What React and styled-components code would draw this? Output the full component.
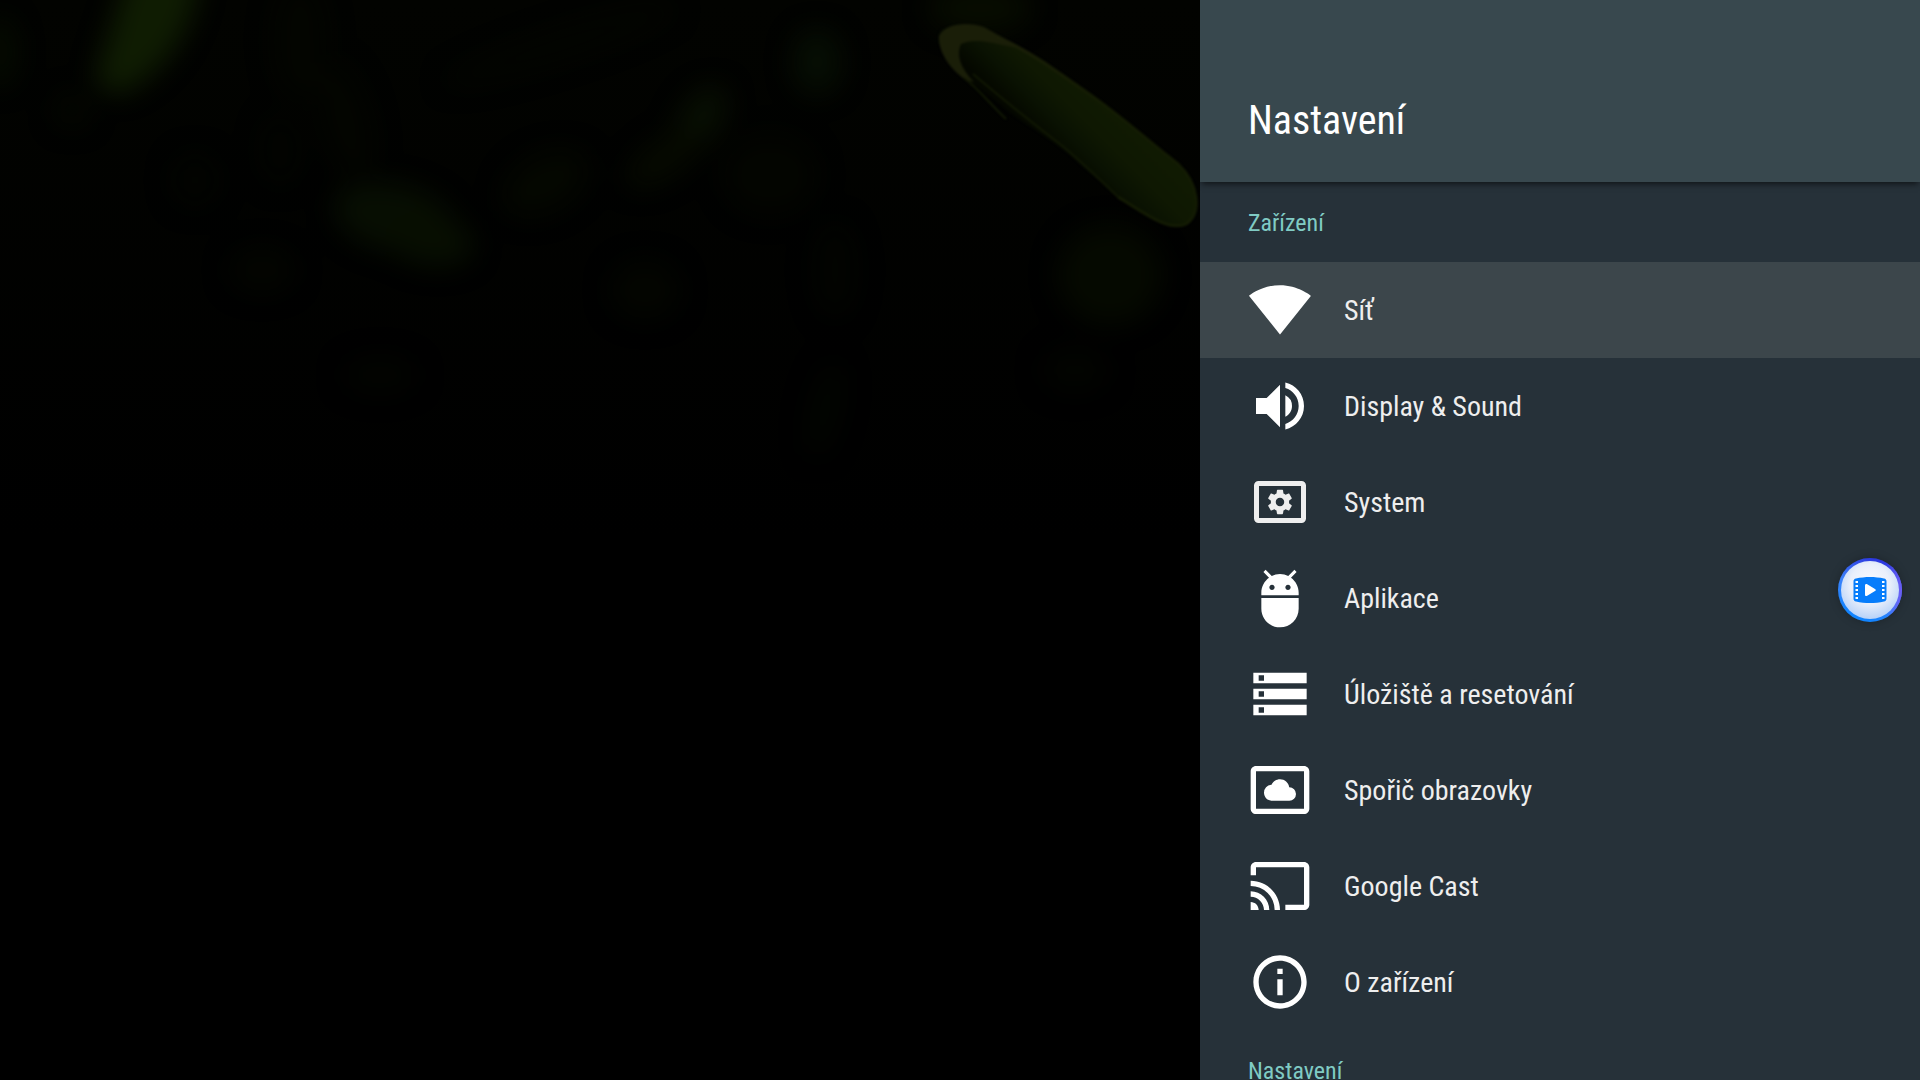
import React, { useState } from "react";
import styled, { createGlobalStyle } from "styled-components";
import {
  MdVolumeUp,
  MdAdb,
  MdStorage,
  MdSettingsSystemDaydream,
  MdCast,
  MdInfoOutline,
} from "react-icons/md";

const GlobalStyle = createGlobalStyle`
  * {
    box-sizing: border-box;
  }

  body {
    margin: 0;
    background: #000;
    font-family: "Roboto Condensed", Roboto, sans-serif;
  }
`;

const Screen = styled.div`
  display: flex;
  height: 100vh;
  overflow: hidden;
  position: relative;
`;

const Wallpaper = styled.div`
  flex: 5;
  min-width: 0;
  background: #000;

  svg {
    display: block;
    width: 100%;
    height: 100%;
  }
`;

const Panel = styled.aside`
  flex: 3;
  min-width: 0;
  overflow: hidden;
  background: #263139;
`;

const Header = styled.header`
  position: relative;
  padding: 97px 48px 37px;
  background: #38484e;
  box-shadow: 0 4px 6px -2px rgba(0, 0, 0, 0.6);
`;

const Title = styled.h1`
  margin: 0;
  font-size: 40px;
  line-height: 48px;
  font-weight: 400;
  color: #fff;
`;

const SectionTitle = styled.h2`
  display: flex;
  align-items: center;
  height: 80px;
  margin: 0;
  padding: 2px 48px 0;
  font-size: 24px;
  line-height: 32px;
  font-weight: 400;
  color: #80cbc4;
`;

const List = styled.ul`
  margin: 0;
  padding: 0;
  list-style: none;
`;

const Row = styled.button`
  display: flex;
  align-items: center;
  gap: 32px;
  width: 100%;
  height: 96px;
  padding: 0 48px;
  border: 0;
  outline: none;
  background: ${({ $active }) => ($active ? "#3c464b" : "transparent")};
  color: #eee;
  font: inherit;
  font-size: 28px;
  line-height: 36px;
  text-align: left;
  cursor: pointer;

  svg {
    flex: none;
    width: 64px;
    height: 64px;
    color: #fff;
  }
`;

const RowLabel = styled.span`
  padding-top: 2px;
`;

const FloatingButton = styled.button`
  position: absolute;
  right: 18px;
  top: calc(50% + 18px);
  width: 64px;
  height: 64px;
  padding: 0;
  border: 0;
  border-radius: 50%;
  background: none;
  box-shadow: 0 0 10px rgba(0, 0, 0, 0.25);
  cursor: pointer;

  svg {
    display: block;
    width: 64px;
    height: 64px;
  }
`;

const WifiIcon = () => (
  <svg viewBox="0 0 24 24" fill="currentColor" aria-hidden="true">
    <path d="M12.01 21.2L23.64 6.7c-.45-.34-4.93-4-11.64-4C5.28 2.7.81 6.36.36 6.7l11.63 14.49.01.01z" />
  </svg>
);

const SystemIcon = () => (
  <svg viewBox="0 0 64 64" aria-hidden="true">
    <rect x="8.5" y="13.5" width="47" height="37" rx="2" fill="none" stroke="#eee" strokeWidth="5" />
    <path
      fill="#eee"
      transform="translate(17.4 17.4) scale(1.215)"
      d="M19.43 12.98c.04-.32.07-.64.07-.98s-.03-.66-.07-.98l2.11-1.65c.19-.15.24-.42.12-.64l-2-3.46c-.12-.22-.39-.3-.61-.22l-2.49 1c-.52-.4-1.08-.73-1.69-.98l-.38-2.65C14.46 2.18 14.25 2 14 2h-4c-.25 0-.46.18-.49.42l-.38 2.65c-.61.25-1.17.59-1.69.98l-2.49-1c-.23-.09-.49 0-.61.22l-2 3.46c-.13.22-.07.49.12.64l2.11 1.65c-.04.32-.07.65-.07.98s.03.66.07.98l-2.11 1.65c-.19.15-.24.42-.12.64l2 3.46c.12.22.39.3.61.22l2.49-1c.52.4 1.08.73 1.69.98l.38 2.65c.03.24.24.42.49.42h4c.25 0 .46-.18.49-.42l.38-2.65c.61-.25 1.17-.59 1.69-.98l2.49 1c.23.09.49 0 .61-.22l2-3.46c.12-.22.07-.49-.12-.64l-2.11-1.65zM12 15.5c-1.93 0-3.5-1.57-3.5-3.5s1.57-3.5 3.5-3.5 3.5 1.57 3.5 3.5-1.57 3.5-3.5 3.5z"
    />
  </svg>
);

const VideoIcon = () => (
  <svg viewBox="0 0 64 64" aria-hidden="true">
    <defs>
      <linearGradient id="ring" x1="0.3" y1="1" x2="0.7" y2="0">
        <stop offset="0" stopColor="#0a84ff" />
        <stop offset="0.5" stopColor="#3c82fa" />
        <stop offset="1" stopColor="#2a2fdc" />
      </linearGradient>
      <linearGradient id="ringSide" x1="0" y1="0" x2="1" y2="0">
        <stop offset="0.75" stopColor="#6f5cf5" stopOpacity="0" />
        <stop offset="1" stopColor="#6f5cf5" />
      </linearGradient>
      <radialGradient id="face" cx="0.5" cy="0.4" r="0.62">
        <stop offset="0" stopColor="#fafbff" />
        <stop offset="0.55" stopColor="#e9effb" />
        <stop offset="1" stopColor="#b4d0f8" />
      </radialGradient>
    </defs>
    <circle cx="32" cy="32" r="32" fill="url(#ring)" />
    <circle cx="32" cy="32" r="32" fill="url(#ringSide)" />
    <circle cx="32" cy="32" r="29" fill="url(#face)" />
    <path
      fill="#077dfb"
      d="M18 20.5c9-2 19-2 28 0 1.6.3 2.5 1.3 2.5 3v17c0 1.7-.9 2.7-2.5 3-9 2-19 2-28 0-1.6-.3-2.5-1.3-2.5-3v-17c0-1.7.9-2.7 2.5-3z"
    />
    <path fill="#fff" d="M27 27.5c0-1.5 1-2 2.2-1.3l7.8 4.7c1 .6 1 1.6 0 2.2l-7.8 4.7c-1.2.7-2.2.2-2.2-1.3z" />
    <g fill="#fff">
      {[24, 28, 32, 36, 40].map((y) => (
        <React.Fragment key={y}>
          <rect x="17.5" y={y - 1} width="2.5" height="2" />
          <rect x="44" y={y - 1} width="2.5" height="2" />
        </React.Fragment>
      ))}
    </g>
  </svg>
);

// Out of focus spots behind the sharp cell
const spots = [
  { x: 0, y: 52, rx: 16, ry: 34, fill: "#050b00" },
  { x: 300, y: 40, rx: 26, ry: 60, fill: "#030500" },
  { x: 345, y: 120, rx: 24, ry: 60, angle: -15, fill: "#030500" },
  { x: 280, y: 150, rx: 18, ry: 34, fill: "#020400" },
  { x: 195, y: 180, rx: 22, ry: 26, fill: "#020400" },
  { x: 72, y: 110, rx: 16, ry: 16, fill: "#040700" },
  { x: 395, y: 218, rx: 62, ry: 34, angle: 14, fill: "#070e02" },
  { x: 430, y: 240, rx: 44, ry: 26, angle: 10, fill: "#070e01" },
  { x: 262, y: 270, rx: 32, ry: 22, fill: "#030500" },
  { x: 545, y: 183, rx: 46, ry: 28, angle: -30, fill: "#040700" },
  { x: 560, y: 45, rx: 120, ry: 14, angle: -18, fill: "#030500" },
  { x: 700, y: 120, rx: 38, ry: 20, angle: -58, fill: "#080f02" },
  { x: 665, y: 158, rx: 44, ry: 18, angle: -35, fill: "#060a00" },
  { x: 817, y: 62, rx: 24, ry: 32, fill: "#060e03" },
  { x: 980, y: 8, rx: 50, ry: 24, fill: "#070c00" },
  { x: 770, y: 175, rx: 46, ry: 40, fill: "#030500" },
  { x: 645, y: 290, rx: 34, ry: 30, fill: "#030500" },
  { x: 835, y: 270, rx: 20, ry: 48, fill: "#020400" },
  { x: 1110, y: 275, rx: 52, ry: 50, fill: "#050900" },
  { x: 1075, y: 370, rx: 32, ry: 22, fill: "#020400" },
  { x: 825, y: 410, rx: 14, ry: 48, angle: 12, fill: "#020500" },
  { x: 380, y: 375, rx: 36, ry: 18, fill: "#020400" },
];

const cellPath =
  "M938 38C938 28 952 24 970 25C982 26 989 31 997 37C1014 43 1030 52 1046 62C1063 75 1079 84 1092 96C1107 110 1120 115 1132 127C1145 139 1156 149 1169 155C1186 169 1197 184 1197 202C1198 219 1188 228 1175 227C1158 225 1144 213 1118 197C1098 179 1085 169 1070 155C1048 137 1032 129 1010 113C988 94 976 85 964 78C951 68 940 54 938 38Z";

const CellBackdrop = () => (
  <svg
    viewBox="0 0 1200 1080"
    preserveAspectRatio="xMidYMin slice"
    colorInterpolationFilters="sRGB"
    aria-hidden="true"
  >
    <defs>
      <filter id="far" x="-10%" y="-10%" width="120%" height="120%">
        <feGaussianBlur stdDeviation="13" />
      </filter>
      <filter id="near" x="-10%" y="-10%" width="120%" height="120%">
        <feGaussianBlur stdDeviation="1" />
      </filter>
      <linearGradient id="depth" x1="0" y1="0" x2="0" y2="1">
        <stop offset="0" stopColor="#020300" />
        <stop offset="0.5" stopColor="#000" />
      </linearGradient>
      <linearGradient id="cell" gradientUnits="userSpaceOnUse" x1="1040" y1="140" x2="1090" y2="90">
        <stop offset="0" stopColor="#040700" />
        <stop offset="0.35" stopColor="#0a1202" />
        <stop offset="0.65" stopColor="#0f1802" />
        <stop offset="1" stopColor="#101a02" />
      </linearGradient>
      <linearGradient id="rim" x1="0" y1="0" x2="1" y2="1">
        <stop offset="0" stopColor="#1b1f08" />
        <stop offset="0.4" stopColor="#141c03" />
        <stop offset="1" stopColor="#131b03" />
      </linearGradient>
    </defs>
    <rect width="1200" height="1080" fill="url(#depth)" />
    <g filter="url(#far)">
      {spots.map(({ x, y, rx, ry, angle = 0, fill }) => (
        <ellipse
          key={`${x}-${y}`}
          cx={x}
          cy={y}
          rx={rx}
          ry={ry}
          fill={fill}
          transform={`rotate(${angle} ${x} ${y})`}
        />
      ))}
      <path d="M130 -30L200 -30C196 25 169 70 124 92C102 96 92 82 100 62C108 38 116 12 130 -30Z" fill="#0f1c02" />
    </g>
    <g filter="url(#near)" fill="none">
      <path d={cellPath} fill="url(#cell)" />
      <path
        d="M966 80C948 68 938 50 939 36C946 22 970 22 984 27C997 34 1010 42 1024 49C1000 46 978 36 961 44C956 54 960 68 974 82Z"
        fill="#1a1e08"
      />
      <path d="M997 37C1030 51 1062 75 1092 96C1128 122 1158 149 1178 164C1199 184 1202 213 1186 224C1168 232 1145 213 1118 197" stroke="url(#rim)" strokeWidth="3" />
      <path d="M964 78C978 88 990 104 1006 119M973 74C1000 97 1026 118 1060 144C1080 160 1098 178 1118 197" stroke="#111803" strokeWidth="2" />
    </g>
  </svg>
);

const deviceItems = [
  { label: "Síť", icon: WifiIcon },
  { label: "Display & Sound", icon: MdVolumeUp },
  { label: "System", icon: SystemIcon },
  { label: "Aplikace", icon: MdAdb },
  { label: "Úložiště a resetování", icon: MdStorage },
  { label: "Spořič obrazovky", icon: MdSettingsSystemDaydream },
  { label: "Google Cast", icon: MdCast },
  { label: "O zařízení", icon: MdInfoOutline },
];

const App = () => {
  const [active, setActive] = useState("Síť");

  return (
    <>
      <GlobalStyle />
      <Screen>
        <Wallpaper>
          <CellBackdrop />
        </Wallpaper>
        <Panel>
          <Header>
            <Title>Nastavení</Title>
          </Header>
          <SectionTitle>Zařízení</SectionTitle>
          <List>
            {deviceItems.map(({ label, icon: Icon }) => (
              <li key={label}>
                <Row type="button" $active={active === label} onClick={() => setActive(label)}>
                  <Icon />
                  <RowLabel>{label}</RowLabel>
                </Row>
              </li>
            ))}
          </List>
          <SectionTitle>Nastavení</SectionTitle>
        </Panel>
        <FloatingButton type="button" aria-label="Video">
          <VideoIcon />
        </FloatingButton>
      </Screen>
    </>
  );
};

export default App;
